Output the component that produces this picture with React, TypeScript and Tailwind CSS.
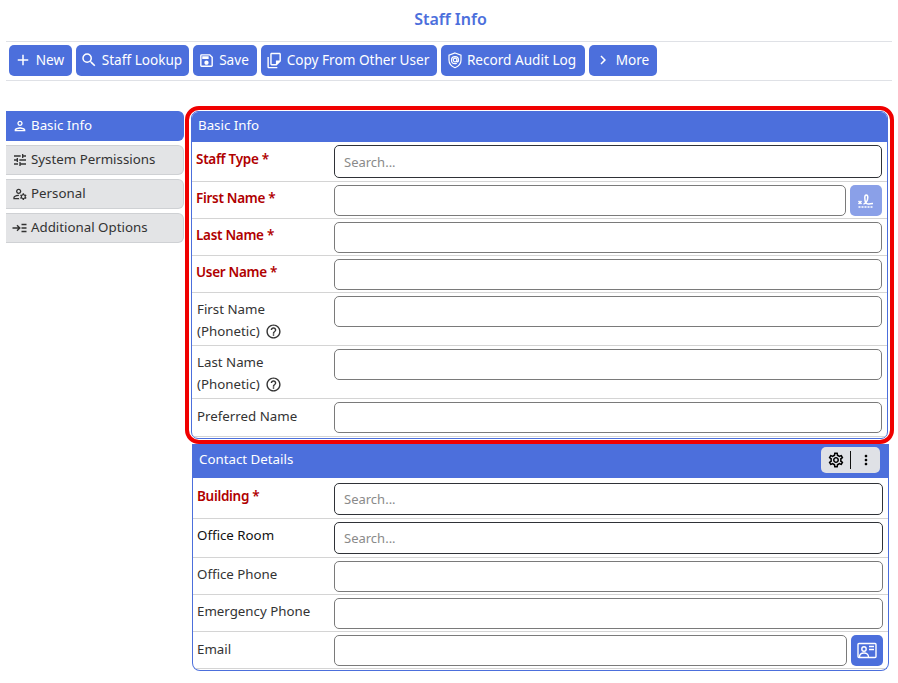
import { MdAdd, MdOutlineSearch, MdOutlineSave, MdOutlineFileCopy, MdChevronRight, MdOutlinePerson, MdOutlineTune, MdOutlineManageAccounts, MdOutlineHelpOutline, MdOutlineSettings, MdMoreVert } from "react-icons/md";
import type { ReactNode } from "react";

function ShieldAt() {
	return (
		<svg width="16" height="17" viewBox="0 0 16 17" fill="none" stroke="currentColor" strokeWidth="1.2">
			<path d="M8 1 14 3.200V8c0 3.600-2.600 6.400-6 7.700C4.600 14.400 2 11.600 2 8V3.200Z" />
			<path d="M9.800 8.500a1.800 1.800 0 1 1 0-1V9c0 1.300 1.700 1.100 1.700-.8 0-2-1.500-3.500-3.500-3.500S4.500 6.300 4.500 8.200s1.500 3.500 3.500 3.500c.7 0 1.300-.2 1.800-.5" />
		</svg>
	);
}

function ArrowList() {
	return (
		<svg width="15" height="12" viewBox="0 0 15 12" fill="none" stroke="currentColor" strokeWidth="1.4">
			<path d="M0.500 6H7.500M5 3.200 7.800 6 5 8.800" />
			<path d="M9.500 2.500H14.500M9.500 6H14.500M9.500 9.500H14.500" />
		</svg>
	);
}

function SignatureIcon() {
	return (
		<svg width="18" height="18" viewBox="0 0 18 18" fill="none" stroke="currentColor" strokeWidth="1.5">
			<path d="M1.500 9 4.500 12M4.500 9 1.500 12" />
			<path d="M6.500 12c2 0 4.300-3.500 4.300-6.500 0-3.500-3-3.500-3 0 0 3.500 1 6.500 3.400 6.500 1.300 0 3-.6 4.800-.6" />
			<path d="M1.500 15H16.500" strokeDasharray="2 1" />
		</svg>
	);
}

function ContactIcon() {
	return (
		<svg width="20" height="18" viewBox="0 0 20 18" fill="none" stroke="currentColor" strokeWidth="1.4">
			<rect x="1" y="1.500" width="18" height="14" rx="1" />
			<circle cx="7" cy="7" r="2.200" />
			<path d="M2.500 15c0-2.800 2-4 4.500-4s4.500 1.200 4.500 4" />
			<path d="M12 4.500H17M12 7.500H17" />
		</svg>
	);
}

const actions = [
	{ label: "New", icon: <MdAdd size={18} />, w: "w-[63px]" },
	{ label: "Staff Lookup", icon: <MdOutlineSearch size={18} />, w: "w-[113px]" },
	{ label: "Save", icon: <MdOutlineSave size={17} />, w: "w-[64px]" },
	{ label: "Copy From Other User", icon: <MdOutlineFileCopy size={17} className="-scale-y-100" />, w: "w-[176px]" },
	{ label: "Record Audit Log", icon: <ShieldAt />, w: "w-[144px]" },
	{ label: "More", icon: <MdChevronRight size={18} />, w: "w-[68px]" },
];

const tabs = [
	{ label: "Basic Info", icon: <MdOutlinePerson size={16} />, active: true },
	{ label: "System Permissions", icon: <MdOutlineTune size={16} /> },
	{ label: "Personal", icon: <MdOutlineManageAccounts size={16} /> },
	{ label: "Additional Options", icon: <ArrowList /> },
];

function Field({ search, dark, h = "h-[31px]" }: { search?: boolean; dark?: boolean; h?: string }) {
	return (
		<input
			placeholder={search ? "Search..." : ""}
			className={`${h} min-w-0 flex-1 rounded-[5px] border bg-white px-[9px] text-[13px] placeholder:text-[#8a8a8a] ${dark ? "border-[#2f3237]" : "border-[#7a7a7a]"}`}
		/>
	);
}

function Row({ label, required, h, dark, children, help, contact, labelPt }: { label: ReactNode; required?: boolean; h: string; dark?: boolean; children: ReactNode; help?: boolean; contact?: boolean; labelPt?: string }) {
	return (
		<div className={`${h} flex items-start border-b border-[#d4d4d4]`}>
			<div className={`shrink-0 leading-[22px] ${contact ? "w-[141px] pl-[4px]" : required ? "w-[142px] pl-[4px]" : "w-[142px] pl-[5px]"} ${labelPt ?? "pt-[5px]"} ${required ? "text-[13.5px] font-semibold tracking-[-0.3px] text-[#b00000]" : `text-[13.3px] ${dark ? "text-[#111]" : "text-[#333]"}`}`}>
				{required ? <>{label} *</> : label}
				{help && <MdOutlineHelpOutline size={17} className="ml-[5px] inline align-[-4px]" />}
			</div>
			<div className="flex flex-1 items-start gap-[4px] pt-[3px] pr-[5px]">{children}</div>
		</div>
	);
}

export default function App() {
	return (
		<div className="h-[683px] w-[898px] overflow-hidden bg-white px-[4px] font-['Noto_Sans',sans-serif]">
			<h1 className="pt-[7px] pb-[9px] pl-[3px] text-center text-[16px] leading-[25px] font-semibold text-[#4c6fdc]">Staff Info</h1>
			<div className="mx-[2px] flex h-[40px] items-start gap-[4px] border-y border-[#dfe1e6] pt-[3px] pl-[3px]">
				{actions.map((a) => (
					<button key={a.label} className={`${a.w} flex h-[31px] items-center justify-center gap-[4px] rounded-[5px] bg-[#4c6fdc] pr-[3px] pb-[1px] text-[13.6px] text-white`}>
						{a.icon}
						{a.label}
					</button>
				))}
			</div>

			<div className="mt-[25px] flex">
				<div className="mt-[5px] ml-[2px] flex w-[178px] shrink-0 flex-col gap-[4px]">
					{tabs.map((t) => (
						<div key={t.label} className={`flex h-[30px] items-center rounded-r-[6px] border-y border-r pl-[6px] text-[13.3px] ${t.active ? "border-[#4c6fdc] bg-[#4c6fdc] text-white" : "border-[#cfd1d4] bg-[#e3e4e6] text-[#333]"}`}>
							<span className="flex w-[19px] shrink-0 justify-start">{t.icon}</span>
							{t.label}
						</div>
					))}
				</div>

				<div className="min-w-0 flex-1 pl-[1px]">
					<div className="h-[338px] w-[709px] rounded-[14px] border-[4px] border-[#f00000] px-[2px] pt-[1px]">
						<div className="h-[328px] overflow-hidden rounded-[7px] border border-[#4c6fdc]">
							<div className="flex h-[30px] items-center bg-[#4c6fdc] pb-[3px] pl-[6px] text-[13.3px] text-white">Basic Info</div>
							<Row label="Staff Type" required labelPt="pt-[6px]" h="h-[40px]"><Field search dark h="h-[33px]" /></Row>
							<Row label="First Name" required h="h-[37px]">
								<Field />
								<button className="flex h-[31px] w-[32px] items-center justify-center rounded-[5px] bg-[#8aa0e8] text-white"><SignatureIcon /></button>
							</Row>
							<Row label="Last Name" required h="h-[37px]"><Field /></Row>
							<Row label="User Name" required h="h-[37px]"><Field /></Row>
							<Row label={<>First Name<br />(Phonetic)</>} help h="h-[53px]"><Field /></Row>
							<Row label={<>Last Name<br />(Phonetic)</>} help h="h-[53px]"><Field /></Row>
							<Row label="Preferred Name" labelPt="pt-[6px]" h="h-[38px]"><Field /></Row>
						</div>
					</div>

					<div className="ml-[7px] h-[227px] w-[697px] overflow-hidden rounded-[8px] rounded-t-none border border-t-0 border-[#4c6fdc]">
						<div className="flex h-[34px] items-center justify-between bg-[#4c6fdc] pr-[8px] pb-[2px] pl-[6px] text-[13.3px] text-white">
							Contact Details
							<div className="flex h-[26px] w-[59px] items-center rounded-[5px] bg-[#dfe1e6] text-black">
								<span className="flex flex-1 items-center justify-center border-r border-[#111]"><MdOutlineSettings size={18} /></span>
								<span className="flex flex-1 items-center justify-center"><MdMoreVert size={16} /></span>
							</div>
						</div>
						<Row label="Building" required contact dark labelPt="pt-[7px]" h="h-[41px]"><div className="flex flex-1 pt-[2px]"><Field search dark h="h-[32px]" /></div></Row>
						<Row label="Office Room" contact dark h="h-[39px]"><Field search dark h="h-[32px]" /></Row>
						<Row label="Office Phone" contact h="h-[37px]"><Field /></Row>
						<Row label="Emergency Phone" contact h="h-[37px]"><Field /></Row>
						<Row label="Email" contact labelPt="pt-[6px]" h="h-[37px]">
							<Field />
							<button className="flex h-[31px] w-[32px] items-center justify-center rounded-[5px] bg-[#4c6fdc] text-white"><ContactIcon /></button>
						</Row>
					</div>
				</div>
			</div>
		</div>
	);
}
